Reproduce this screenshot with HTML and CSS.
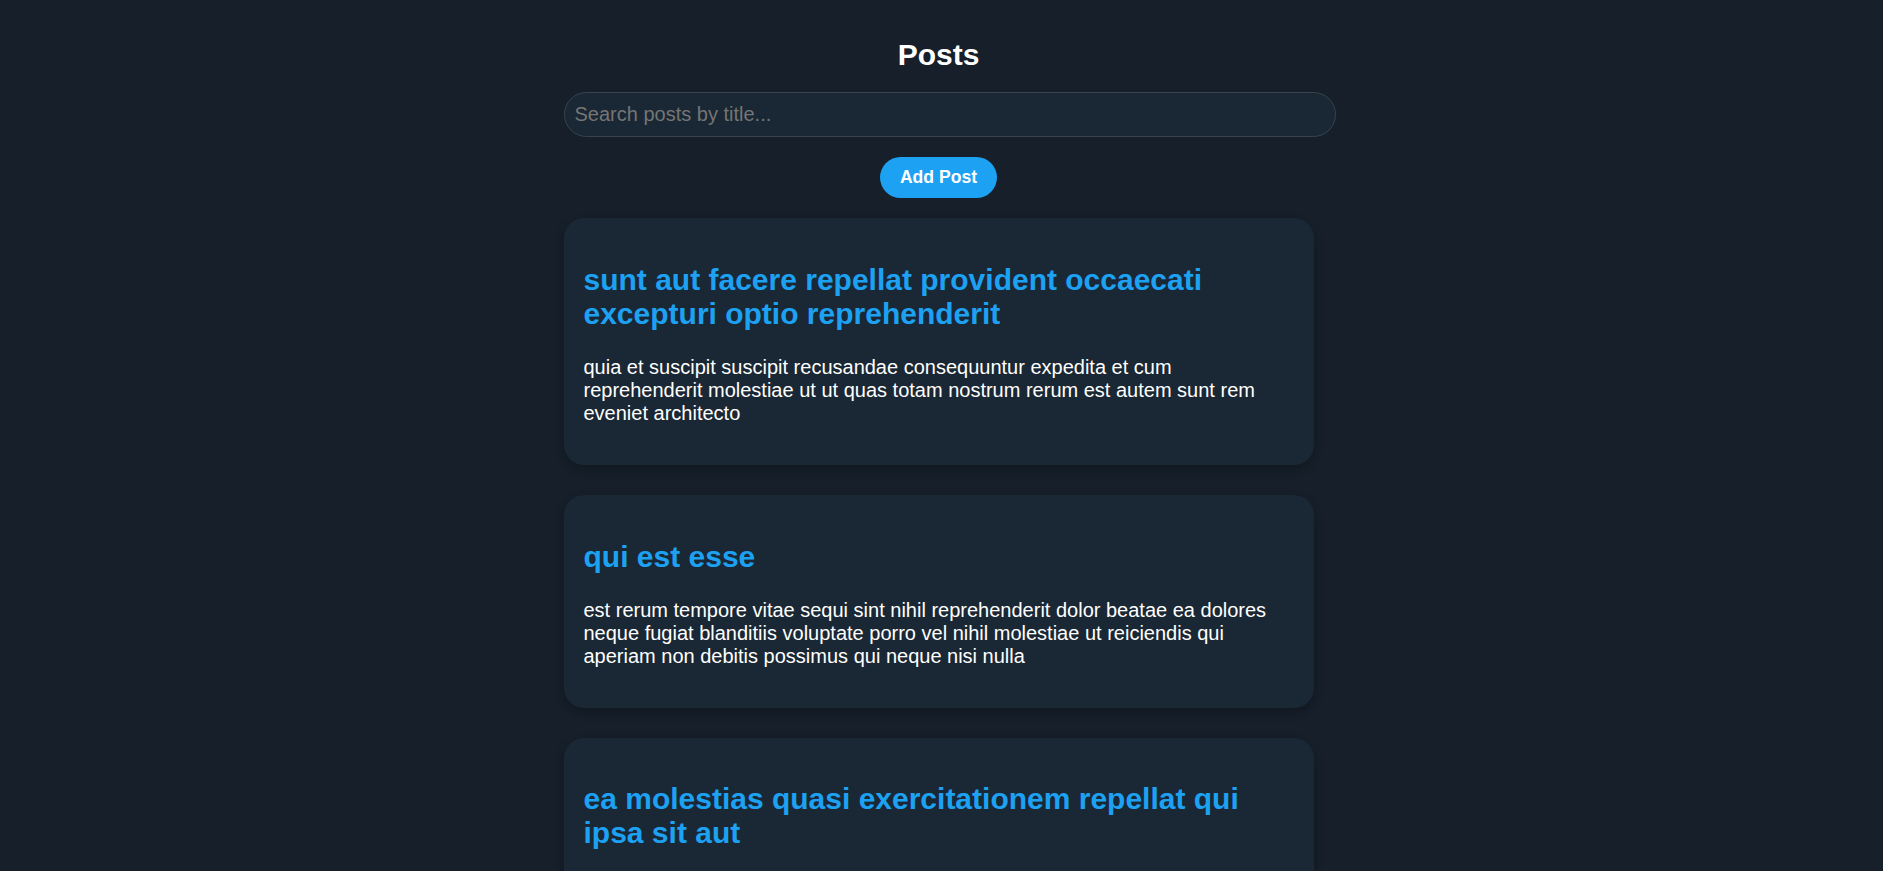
FILE: index.html
```html
<!DOCTYPE html>
<html lang="en">
<head>
<meta charset="utf-8">
<title>Posts</title>
<link rel="stylesheet" href="styles.css">
</head>
<body>
<div class="container">
  <h1 class="page-title">Posts</h1>
  <input class="search" type="text" placeholder="Search posts by title...">
  <div class="actions">
    <button class="add-btn">Add Post</button>
  </div>
  <div class="post-list">
    <div class="post-card">
      <h2 class="post-title">sunt aut facere repellat provident occaecati excepturi optio reprehenderit</h2>
      <p class="post-body">quia et suscipit suscipit recusandae consequuntur expedita et cum reprehenderit molestiae ut ut quas totam nostrum rerum est autem sunt rem eveniet architecto</p>
    </div>
    <div class="post-card">
      <h2 class="post-title">qui est esse</h2>
      <p class="post-body">est rerum tempore vitae sequi sint nihil reprehenderit dolor beatae ea dolores neque fugiat blanditiis voluptate porro vel nihil molestiae ut reiciendis qui aperiam non debitis possimus qui neque nisi nulla</p>
    </div>
    <div class="post-card">
      <h2 class="post-title">ea molestias quasi exercitationem repellat qui ipsa sit aut</h2>
      <p class="post-body">et iusto sed quo iure voluptatem occaecati omnis eligendi aut ad voluptatem doloribus vel accusantium quis pariatur molestiae porro eius odio et labore et velit aut</p>
    </div>
  </div>
</div>
</body>
</html>
```
FILE: styles.css
```css
html, body {
  margin: 0;
  background: #161f2a;
}
body {
  padding: 0 6px 0 0;
  font-family: "Liberation Sans", Arial, sans-serif;
  font-size: 20px;
  color: #ffffff;
}
.container {
  width: 750px;
  margin: 0 auto;
  padding-top: 18px;
}
.page-title {
  margin: 20px 0;
  font-size: 30px;
  font-weight: bold;
  text-align: center;
  color: #ffffff;
}
.search {
  display: block;
  width: 100%;
  margin: 0;
  padding: 10px;
  font-family: "Liberation Sans", Arial, sans-serif;
  font-size: 20px;
  color: #ffffff;
  background: #1a2734;
  border: 1px solid #38444d;
  border-radius: 23px;
  outline: none;
}
.search::placeholder {
  color: #757575;
}
.actions {
  display: flex;
  justify-content: center;
  margin: 20px 0;
}
.add-btn {
  padding: 10px 20px;
  font-family: "Liberation Sans", Arial, sans-serif;
  font-size: 17.6px;
  font-weight: bold;
  color: #ffffff;
  background: #1da1f2;
  border: none;
  border-radius: 21px;
}
.post-list {
  display: flex;
  flex-direction: column;
  gap: 30px;
}
.post-card {
  padding: 20px;
  background: #1a2734;
  border-radius: 20px;
  box-shadow: 0 4px 10px rgba(0, 0, 0, 0.25);
}
.post-title {
  margin: 0.83em 0;
  font-size: 30px;
  font-weight: bold;
  color: #1da1f2;
}
.post-body {
  margin: 1em 0;
  font-size: 20px;
  color: #ffffff;
}
```
